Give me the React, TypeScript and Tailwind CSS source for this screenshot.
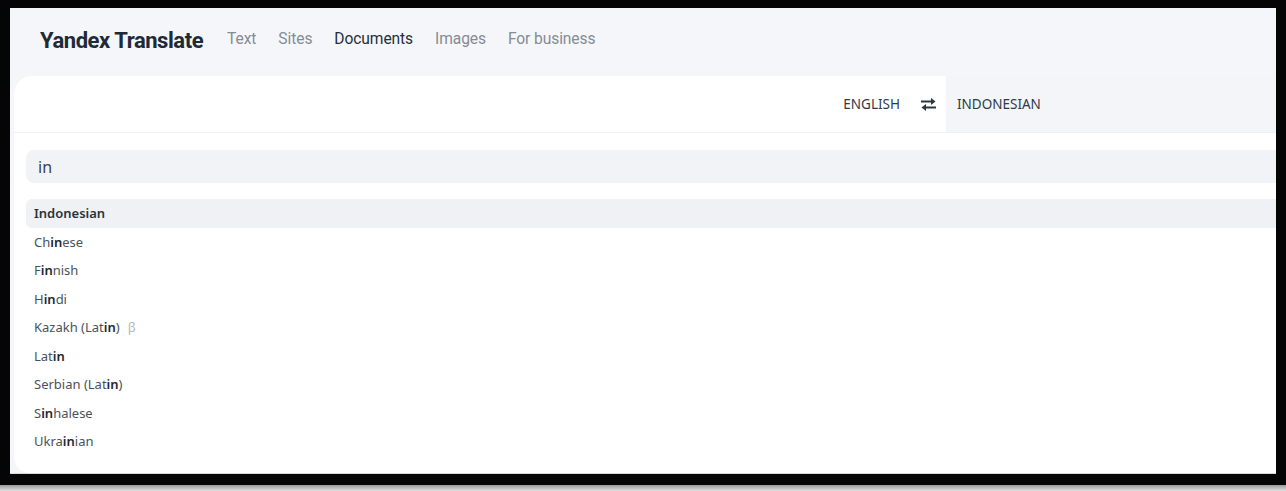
import React from "react";

const items: { parts: [string, boolean][]; beta?: boolean }[] = [
  { parts: [["Ch", false], ["in", true], ["ese", false]] },
  { parts: [["F", false], ["in", true], ["nish", false]] },
  { parts: [["H", false], ["in", true], ["di", false]] },
  { parts: [["Kazakh (Lat", false], ["in", true], [")", false]], beta: true },
  { parts: [["Lat", false], ["in", true]] },
  { parts: [["Serbian (Lat", false], ["in", true], [")", false]] },
  { parts: [["S", false], ["in", true], ["halese", false]] },
  { parts: [["Ukra", false], ["in", true], ["ian", false]] },
];

function SwapIcon() {
  return (
    <svg width="17" height="15" viewBox="0 0 17 15" fill="none">
      <path d="M1 4.5H13" stroke="#2b3843" strokeWidth="2" />
      <path d="M11 1L15.5 4.5L11 8Z" fill="#2b3843" />
      <path d="M4 10.5H16" stroke="#2b3843" strokeWidth="2" />
      <path d="M6 7L1.5 10.5L6 14Z" fill="#2b3843" />
    </svg>
  );
}

export default function App() {
  return (
    <div className="w-[1286px] h-[491px] flex flex-col bg-[#cfcfcf] overflow-hidden">
      <div className="h-[485px] shrink-0 bg-[#050505] pl-[10px] pr-[10px] pt-[8px] pb-[11px]">
        <div className="h-full bg-[#f5f6f9] flex flex-col overflow-hidden border-b border-[#d8d8d8]">
          <div className="h-[68px] shrink-0 flex items-center pl-[30px] pb-[4px] font-['Roboto',sans-serif]">
            <div className="text-[22px] font-bold tracking-[-0.45px] text-[#1f2a37] mr-[24px]">
              Yandex Translate
            </div>
            <nav className="flex items-center gap-[22px] text-[15.6px] text-[#858c96] tracking-[-0.1px]">
              <span>Text</span>
              <span>Sites</span>
              <span className="text-[#26303b]">Documents</span>
              <span>Images</span>
              <span>For business</span>
            </nav>
          </div>
          <div className="flex-1 ml-[4px] bg-white rounded-tl-[18px] rounded-bl-[16px] flex flex-col font-['Noto_Sans',sans-serif]">
            <div className="h-[57px] shrink-0 flex border-b border-[#eef0f3]">
              <div className="flex-1 flex items-center justify-end pr-[9px] gap-[20px]">
                <span className="text-[13.5px] text-[#2f3a45]">ENGLISH</span>
                <SwapIcon />
              </div>
              <div className="w-[330px] bg-[#f4f5f8] flex items-center pl-[11px]">
                <span className="text-[13.5px] text-[#2f3a45]">INDONESIAN</span>
              </div>
            </div>
            <div className="pl-[12px] pt-[17px]">
              <div className="h-[33px] bg-[#f2f3f6] rounded-l-[8px] flex items-center pl-[12px] text-[16px] text-[#3b4249]">
                in
              </div>
            </div>
            <div className="pl-[12px] pt-[16px] flex flex-col text-[13px] text-[#4a525a]">
              <div className="h-[29px] bg-[#f0f1f4] rounded-l-[6px] flex items-center pl-[8px] font-semibold text-[#2a333c]">
                Indonesian
              </div>
              {items.map((it, i) => (
                <div key={i} className="h-[28.5px] flex items-center pl-[8px]">
                  {it.parts.map(([t, b], j) => (
                    <span key={j} className={b ? "font-semibold text-[#1f2830]" : ""}>
                      {t}
                    </span>
                  ))}
                  {it.beta && <span className="ml-[8px] text-[#b3b9c0]">β</span>}
                </div>
              ))}
            </div>
          </div>
        </div>
      </div>
      <div className="flex-1 bg-gradient-to-b from-[#9a9a9a] to-[#e2e2e2]" />
    </div>
  );
}
